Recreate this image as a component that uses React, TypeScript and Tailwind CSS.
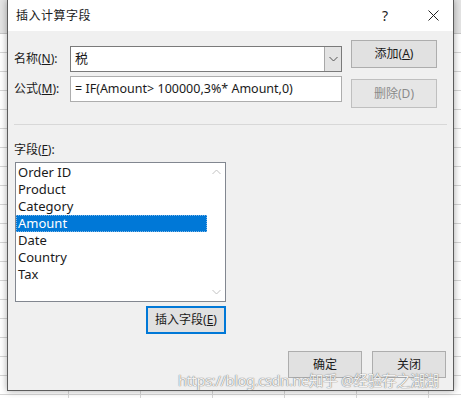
import React from 'react';

const fields = ['Order ID', 'Product', 'Category', 'Amount', 'Date', 'Country', 'Tax'];

const Chevron: React.FC<{ up?: boolean; className?: string }> = ({ up, className }) => (
  <svg width="9" height="6" viewBox="0 0 9 6" className={className}>
    <path d={up ? 'M0.5 5 L4.5 1 L8.5 5' : 'M0.5 1 L4.5 5 L8.5 1'} fill="none" stroke="currentColor" strokeWidth="1" />
  </svg>
);

const Btn: React.FC<{ children: React.ReactNode; disabled?: boolean; className?: string }> = ({ children, disabled, className }) => (
  <div
    className={`flex items-center justify-center border text-[12px] ${
      disabled ? 'border-[#bfbfbf] bg-[#e6e6e6] text-[#8a8a8a]' : 'border-[#adadad] bg-[#e1e1e1] text-[#1a1a1a]'
    } ${className ?? ''}`}
  >
    {children}
  </div>
);

const App: React.FC = () => {
  return (
    <div className="relative w-[461px] h-[398px] overflow-hidden bg-white font-['Noto_Sans','Noto_Sans_CJK_SC',sans-serif]">
      {/* spreadsheet behind the dialog */}
      <div className="h-[34px] bg-[#e4e4e4] border-b border-[#c8c8c8]" />
      <div className="h-[364px] bg-[repeating-linear-gradient(to_bottom,transparent_0_18px,#d6d6d6_18px_19px)]">
        <div className="h-full bg-[repeating-linear-gradient(to_right,transparent_0_71px,#d6d6d6_71px_72px)] bg-[position:-3px_0]" />
      </div>

      {/* dialog window */}
      <div className="absolute left-[7px] top-0 w-[447px] h-[391px] flex flex-col border border-t-0 border-[#5c5c5c] bg-[#f0f0f0] shadow-[0_0_7px_rgba(0,0,0,0.35)] text-[#1a1a1a]">
        <div className="h-[31px] bg-white flex items-center pl-[8px] pr-[14px] text-[12px]">
          <span className="tracking-[0.5px]">插入计算字段</span>
          <span className="ml-auto mr-[40px] text-[14px] text-[#222]">?</span>
          <svg width="11" height="11" viewBox="0 0 11 11">
            <path d="M0.5 0.5 L10.5 10.5 M10.5 0.5 L0.5 10.5" stroke="#222" strokeWidth="1" />
          </svg>
        </div>

        <div className="flex-1 flex flex-col px-[6px] pt-[9px]">
          <div className="flex">
            <div className="mt-[6px] flex flex-col gap-[4px]">
              <div className="flex items-center h-[26px]">
                <span className="w-[56px] text-[12px]">
                  名称(<span className="underline">N</span>):
                </span>
                <div className="w-[272px] h-[26px] flex items-center border border-[#7a7a7a] bg-white">
                  <span className="pl-[4px] text-[13px] flex-1">税</span>
                  <div className="w-[17px] h-full flex items-center justify-center bg-[#e3e3e3] border-l border-[#a8a8a8] text-[#555]">
                    <Chevron />
                  </div>
                </div>
              </div>
              <div className="flex items-center h-[26px]">
                <span className="w-[56px] text-[12px]">
                  公式(<span className="underline">M</span>):
                </span>
                <div className="w-[272px] h-[26px] flex items-center border border-[#adadad] bg-white pl-[4px] text-[12.5px]">
                  = IF(Amount&gt; 100000,3%* Amount,0)
                </div>
              </div>
            </div>
            <div className="ml-[9px] flex flex-col gap-[11px]">
              <Btn className="w-[86px] h-[28px]">
                添加(<span className="underline">A</span>)
              </Btn>
              <Btn disabled className="w-[86px] h-[29px]">
                删除(D)
              </Btn>
            </div>
          </div>

          <div className="mt-[16px] h-px bg-[#d8d8d8]" />

          <div className="mt-[17px] text-[12px] leading-[16px]">
            字段(<span className="underline">F</span>):
          </div>
          <div className="mt-[4px] ml-[1px] w-[211px]">
            <div className="h-[140px] flex border border-[#828790] bg-white">
              <div className="flex-1 pt-[1px] text-[13px]">
                {fields.map((f) => (
                  <div
                    key={f}
                    className={`h-[17px] leading-[17px] pl-[2px] ${
                      f === 'Amount' ? 'bg-[#0078d7] text-white outline outline-1 outline-dotted outline-[#7fb6e6] -outline-offset-1' : ''
                    }`}
                  >
                    {f}
                  </div>
                ))}
              </div>
              <div className="w-[18px] flex flex-col items-center justify-between py-[6px] text-[#c2c2c2]">
                <Chevron up />
                <Chevron />
              </div>
            </div>
            <div className="mt-[4px] flex justify-end">
              <div className="w-[80px] h-[28px] flex items-center justify-center border-2 border-[#0078d7] bg-[#e1e1e1] text-[12px]">
                插入字段(<span className="underline">E</span>)
              </div>
            </div>
          </div>

          <div className="mt-[17px] flex justify-end gap-[10px] pr-[1px]">
            <Btn className="w-[74px] h-[27px]">确定</Btn>
            <Btn className="w-[74px] h-[27px]">关闭</Btn>
          </div>
        </div>
      </div>

      {/* watermark */}
      <div className="absolute left-[178px] top-[370px] text-[14.5px] tracking-[-0.3px] text-white/90 [text-shadow:0_0_1px_#777,0_0_1px_#777] whitespace-nowrap">
        https://blog.csdn.ne知乎 @经验存之湖湖
      </div>
    </div>
  );
};

export default App;
